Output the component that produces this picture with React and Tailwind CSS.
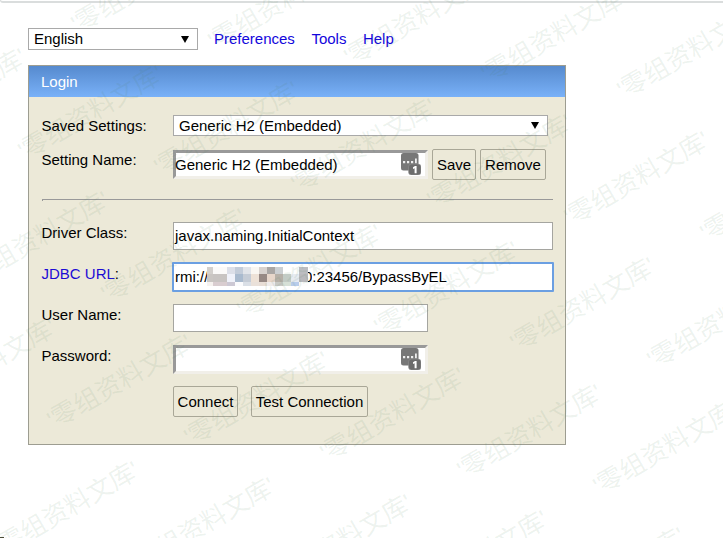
import React from "react";

const MOSAIC = [
  { h: 7, c: ["#d3d0cd", "#fbfaf9", "#dcdfe8", "#c3ccd9", "#e1e4e9", "#faf7f2", "#d8d2ce", "#a9a6a4", "#cbcfd2", "#ffffff", "#fdfdfd", "#bcbdc1"] },
  { h: 8, c: ["#cac6c3", "#c8c4c2", "#f0f2fa", "#a9bace", "#c5ccd6", "#eee2d7", "#978984", "#e7d6ca", "#b6b0a8", "#c2cbc5", "#e6ebf1", "#b9b9bd"] },
  { h: 4, c: ["#f6f2ef", "#d9cdd0", "#ccc8d4", "#fbfbfd", "#dadfe6", "#eae1da", "#e9ded6", "#f0eceb", "#c9cac5", "#d6e0d6", "#b9cdea", "#fdfdfd"] },
];
const MOSAIC_COLS = "grid-cols-[6px_14px_8px_8px_8px_8px_8px_8px_8px_8px_8px_9px]";

const MARKS = [];
for (let r = -2; r <= 5; r++) {
  for (let c = -7; c <= 6; c++) {
    const x = 690 + c * 136.5 - r * 53.5;
    const y = 52 + c * 16.5 + r * 126.5;
    if (x > -90 && x < 810 && y > -60 && y < 600) MARKS.push({ x, y });
  }
}

function Watermark() {
  return (
    <div className="pointer-events-none absolute inset-0 overflow-hidden">
      {MARKS.map((m, i) => (
        <span
          key={i}
          className="absolute -translate-x-1/2 -translate-y-1/2 -rotate-30 whitespace-nowrap font-['Liberation_Sans','Noto_Sans_CJK_SC',sans-serif] text-[25.5px] leading-none text-[#4c7f5c]/10"
          style={{ left: m.x, top: m.y }}
        >
          '零组资料文库'
        </span>
      ))}
    </div>
  );
}

function Arrow() {
  return (
    <svg className="h-[7px] w-[8px]" viewBox="0 0 8 7">
      <path d="M0 0H8L4 7Z" fill="#000" />
    </svg>
  );
}

function KeyIcon() {
  return (
    <svg className="h-[22px] w-[20px] shrink-0" viewBox="0 0 20 22">
      <rect x="0" y="0" width="17.5" height="17.5" rx="2.5" fill="#777" />
      <path d="M2 8h2.2v2.2H2zM6 8h2.2v2.2H6zM10 8h2.2v2.2H10zM14 5.5h1.8v4.7H14z" fill="#eee" />
      <rect x="7.5" y="11" width="12.5" height="11" rx="3" fill="#6c6c6c" stroke="#999" strokeWidth=".5" />
      <path d="M12 14.3L14 13h1.6v7.2h-2v-5L12 16z" fill="#fff" />
    </svg>
  );
}

function Label({ children }) {
  return <div className="w-[132px] shrink-0 pl-[0.5px] leading-[18px]">{children}</div>;
}

function InsetInput({ children }) {
  return (
    <div className="flex h-[29px] w-[255px] justify-between border-[3px] border-b-[#f1efe9] border-l-[#999] border-r-[#f1efe9] border-t-[#999] bg-white pr-1">
      <span className="-ml-px leading-[23px]">{children}</span>
      <KeyIcon />
    </div>
  );
}

function Button({ children, className }) {
  return (
    <button className={`h-[31px] shrink-0 rounded-[2px] border border-[#a9a797] bg-[#ece9d8] text-center whitespace-nowrap ${className}`}>
      {children}
    </button>
  );
}

export default function App() {
  return (
    <div className="relative h-[538px] w-[723px] overflow-hidden bg-white font-['Liberation_Sans',Arial,sans-serif] text-[15px] leading-[18px] text-black">
      <div className="h-[3px] rounded-bl-[3px] border-b-2 border-l border-[#dadddd]" />

      <div className="mt-[25px] ml-[28px] flex h-[22px] items-center">
        <div className="flex h-[22px] w-[170px] items-center justify-between border border-[#a9a9a9] bg-white pr-2 pl-[5px]">
          <span>English</span>
          <Arrow />
        </div>
        <nav className="ml-4 flex gap-[16.5px] text-[#1206dc]">
          <a>Preferences</a>
          <a>Tools</a>
          <a>Help</a>
        </nav>
      </div>

      <div className="mt-[15px] ml-[28px] h-[380px] w-[538px] border border-[#9d9d91] bg-[#ece9d8]">
        <div className="h-[31px] bg-linear-to-b from-[#568ace] to-[#79b1f8] pl-3 leading-[32px] text-white">Login</div>

        <div className="flex flex-col pl-3">
          <div className="mt-[18px] flex h-[21px]">
            <div className="pt-[2px]"><Label>Saved Settings:</Label></div>
            <div className="flex h-[21px] w-[375px] items-center justify-between border border-[#a9a9a9] bg-white pr-2 pl-[5px]">
              <span>Generic H2 (Embedded)</span>
              <Arrow />
            </div>
          </div>

          <div className="mt-[13px] flex h-[31px]">
            <div className="pt-[2px]"><Label>Setting Name:</Label></div>
            <div className="pt-px"><InsetInput>Generic H2 (Embedded)</InsetInput></div>
            <Button className="ml-1 w-[44px]">Save</Button>
            <Button className="ml-1 w-[66px]">Remove</Button>
          </div>

          <div className="mt-[19px] ml-px h-[2px] w-[511px] border-t border-l border-[#999]" />

          <div className="mt-[21px] flex h-[28px]">
            <div className="pt-[2px]"><Label>Driver Class:</Label></div>
            <div className="h-[28px] w-[380px] border border-[#a5a5a0] bg-white pl-px leading-[25px]">javax.naming.InitialContext</div>
          </div>

          <div className="mt-[12px] flex h-[29px]">
            <div className="pt-[3px]"><Label><span className="text-[#1c0cd4]">JDBC URL</span>:</Label></div>
            <div className="-ml-px flex h-[30px] w-[382px] items-center rounded-[1px] border-2 border-[#6b9fe2] bg-white pl-px">
              <span>rmi://</span>
              <div className="mt-[-2px] -ml-px w-[101px] shrink-0">
                {MOSAIC.map((row, i) => (
                  <div key={i} className={`grid ${MOSAIC_COLS}`} style={{ height: row.h }}>
                    {row.c.map((c, j) => (
                      <div key={j} style={{ background: c }} />
                    ))}
                  </div>
                ))}
              </div>
              <div className="flex w-[4px] shrink-0 justify-end overflow-hidden"><span>0</span></div>
              <span className="tracking-[-0.03px]">:23456/BypassByEL</span>
            </div>
          </div>

          <div className="mt-[13px] flex h-[28px]">
            <div className="pt-[2px]"><Label>User Name:</Label></div>
            <div className="h-[28px] w-[255px] border border-[#a5a5a0] bg-white" />
          </div>

          <div className="mt-[13px] flex h-[29px]">
            <div className="pt-[2px]"><Label>Password:</Label></div>
            <InsetInput />
          </div>

          <div className="mt-[12px] flex gap-[13px] pl-[132px]">
            <Button className="w-[65px]">Connect</Button>
            <Button className="w-[117px]">Test Connection</Button>
          </div>
        </div>
      </div>

      <div className="mt-[92px] h-px w-[4px] bg-[#4a4a38]" />
      <Watermark />
    </div>
  );
}
